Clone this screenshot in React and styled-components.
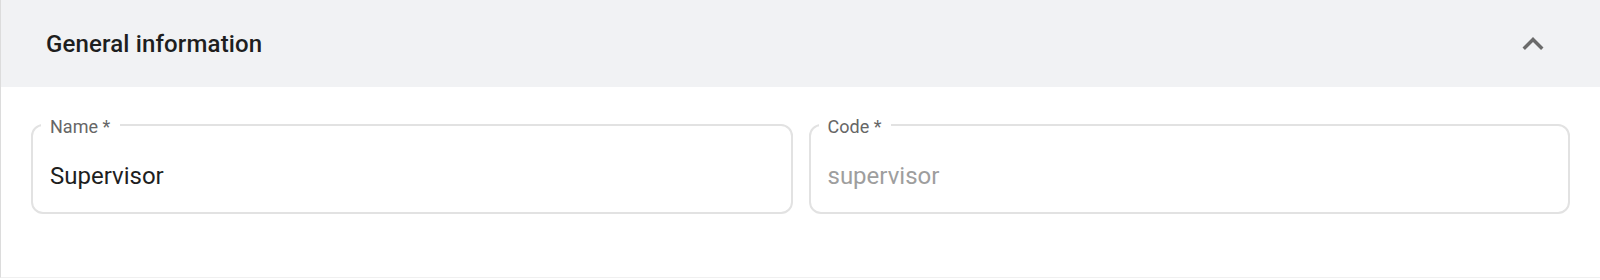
import styled, { createGlobalStyle } from "styled-components";

const GlobalStyle = createGlobalStyle`
  html, body {
    margin: 0;
    padding: 0;
    background: #ffffff;
  }
  body {
    font-family: Roboto, "Liberation Sans", Arial, sans-serif;
    -webkit-font-smoothing: antialiased;
  }
`;

const ExpandLessIcon = () => (
  <svg width="42" height="42" viewBox="0 0 24 24" fill="#6b6b6b">
    <path d="M12 8l-6 6 1.41 1.41L12 10.83l4.59 4.58L18 14z" />
  </svg>
);

const Field = ({ label, value, disabled }) => (
  <Outline>
    <Legend>{label}</Legend>
    <Input value={value} disabled={disabled} readOnly $disabled={disabled} />
  </Outline>
);

const App = () => {
  return (
    <>
      <GlobalStyle />
      <Card>
        <Header>
          <Title>General information</Title>
          <ToggleButton type="button" aria-label="Collapse">
            <ExpandLessIcon />
          </ToggleButton>
        </Header>
        <Body>
          <Field label="Name *" value="Supervisor" />
          <Field label="Code *" value="supervisor" disabled />
        </Body>
      </Card>
    </>
  );
};

export default App;

const Card = styled.section`
  border-left: 1px solid #dcdcdc;
  border-bottom: 1px solid #f0f0f0;
  background: #ffffff;
  box-sizing: border-box;
  height: 278px;
`;

const Header = styled.header`
  height: 87px;
  background: #f1f2f4;
  display: flex;
  align-items: center;
  justify-content: space-between;
  padding: 0 46px 0 45px;
`;

const Title = styled.h2`
  margin: 0;
  font-size: 24px;
  font-weight: 500;
  color: #1e1e1e;
  letter-spacing: 0.15px;
`;

const ToggleButton = styled.button`
  border: none;
  background: transparent;
  padding: 0;
  margin-top: 1px;
  width: 42px;
  height: 42px;
  display: flex;
  align-items: center;
  justify-content: center;
  cursor: pointer;
`;

const Body = styled.div`
  display: grid;
  grid-template-columns: 1fr 1fr;
  gap: 16px;
  padding: 27px 30px 0 30px;
`;

const Outline = styled.fieldset`
  margin: 0;
  min-width: 0;
  border: 2px solid #e2e2e2;
  border-radius: 12px;
  padding: 22px 8px 18px 8px;
  box-sizing: border-box;
`;

const Legend = styled.legend`
  padding: 4px 10px 0 9px;
  font-size: 18px;
  line-height: 1;
  color: #666666;
`;

const Input = styled.input`
  display: block;
  width: 100%;
  box-sizing: border-box;
  border: none;
  outline: none;
  background: transparent;
  padding: 0 9px;
  font-family: inherit;
  font-size: 24px;
  line-height: 36px;
  height: 36px;
  color: ${({ $disabled }) => ($disabled ? "#9e9e9e" : "#1e1e1e")};
  -webkit-text-fill-color: ${({ $disabled }) =>
    $disabled ? "#9e9e9e" : "#1e1e1e"};
`;
